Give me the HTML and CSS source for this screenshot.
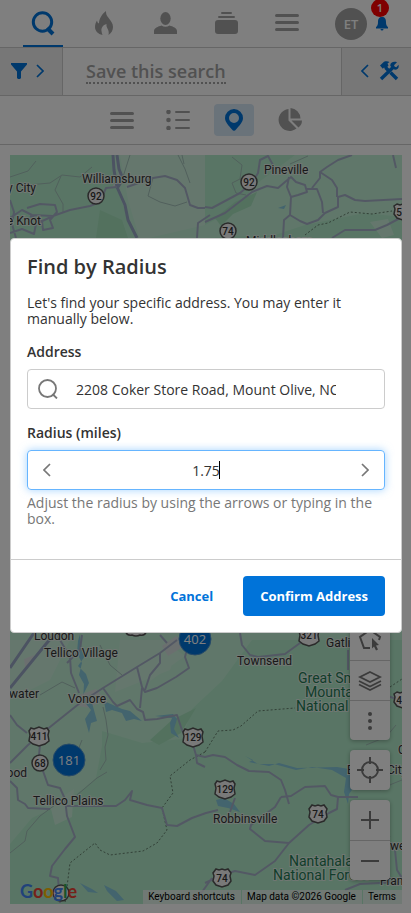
FILE: index.html
```html
<!DOCTYPE html>
<html lang="en">
<head>
    <meta charset="UTF-8">
    <meta name="viewport" content="width=device-width, initial-scale=1.0">
    <title>Find by Radius</title>
    <link rel="stylesheet" href="styles.css">
</head>
<body>
    <div class="page">
        <header class="topbar">
            <nav class="tabs">
                <a href="#" class="tab active" aria-label="Search">
                    <svg width="24" height="26" viewBox="0 0 24 26" fill="none" stroke="currentColor" stroke-width="3"><circle cx="11.500" cy="12" r="9.200"/><path d="M16 18l6 6" stroke-width="4"/></svg>
                </a>
                <a href="#" class="tab" aria-label="Hot leads">
                    <svg width="18" height="24" viewBox="0 0 18 24" fill="currentColor"><path d="M11 0c0 4 1 5 3 7.500 2 2.500 4 5 4 8.500 0 3-1.500 6-4.500 8 .5-2 .3-4-.8-6-.8-1.500-1.500-3-1.200-5C8 14 6 17 6.500 20c.1 1.500.5 2.500 1 4C3 23 0 20 0 16c0-2.500.8-4.500 2-6.500.3 1.500.8 2.500 2 3C4 8 7 3 11 0z"/></svg>
                </a>
                <a href="#" class="tab" aria-label="Contacts">
                    <svg width="23" height="22" viewBox="0 0 23 22" fill="currentColor"><ellipse cx="11.500" cy="6.500" rx="5.200" ry="6.500"/><path d="M0 22v-3c0-3 4-4.500 7.500-5.500 2.500 1.800 5.500 1.800 8 0C19 14.500 23 16 23 19v3z"/></svg>
                </a>
                <a href="#" class="tab" aria-label="Collections">
                    <svg width="23" height="22" viewBox="0 0 23 22" fill="currentColor"><rect x="6" y="0" width="11" height="2" rx="1"/><rect x="3" y="4" width="17" height="2" rx="1"/><rect x="0" y="8" width="23" height="14" rx="3"/></svg>
                </a>
                <a href="#" class="tab" aria-label="Menu">
                    <svg width="24" height="18" viewBox="0 0 24 18" fill="currentColor"><rect width="24" height="3" rx="1.500"/><rect y="7" width="24" height="3" rx="1.500"/><rect y="14" width="24" height="3" rx="1.500"/></svg>
                </a>
            </nav>
            <div class="account">
                <button type="button" class="avatar">ET</button>
                <button type="button" class="bell" aria-label="Notifications">
                    <svg width="12" height="14" viewBox="0 0 12 14" fill="currentColor"><path d="M6 0c3 0 4 2 4 5 0 2.500.5 4 2 5v1.500H0V10c1.500-1 2-2.500 2-5 0-3 1-5 4-5zM4.500 12h3a1.500 1.500 0 0 1-3 0z"/></svg>
                    <span class="badge">1</span>
                </button>
            </div>
        </header>

        <div class="searchbar">
            <button type="button" class="side filter" aria-label="Filters">
                <svg width="16" height="16" viewBox="0 0 16 16" fill="currentColor"><path d="M0 0h16v1.500L10 8.500V15l-1 1H7l-1-1V8.500L0 1.500z"/></svg>
                <svg width="8" height="14" viewBox="0 0 8 14" fill="none" stroke="currentColor" stroke-width="1.700"><path d="M1 1l6 6-6 6"/></svg>
            </button>
            <div class="save"><a href="#">Save this search</a></div>
            <button type="button" class="side tools" aria-label="Tools">
                <svg width="8" height="14" viewBox="0 0 8 14" fill="none" stroke="currentColor" stroke-width="1.700"><path d="M7 1L1 7l6 6"/></svg>
                <svg width="20" height="20" viewBox="0 0 20 20"><path d="M2 18L14.500 6" stroke="currentColor" stroke-width="3.400"/><path d="M18 1.200l-3 3 .8 1.500 1.500.5 2.200-2.400c1 3-1.500 5.500-4.500 4.700L11.300 5C10.800 2 14 0 18 1.200z" fill="currentColor"/><path d="M1 4.500L5 .8C7 0 9 .2 10.500 1L8.500 2.500l1 2L6.500 8 5 6.500 3.800 7.700z" fill="currentColor"/><path d="M6.500 6.500l3 3M11.500 11.500l6.500 6.500" stroke="currentColor" stroke-width="3.400"/></svg>
            </button>
        </div>

        <div class="views">
            <button type="button" class="view" aria-label="Rows">
                <svg width="24" height="17" viewBox="0 0 24 17" fill="currentColor"><rect width="24" height="3" rx="1.500"/><rect y="7" width="24" height="3" rx="1.500"/><rect y="14" width="24" height="3" rx="1.500"/></svg>
            </button>
            <button type="button" class="view" aria-label="List">
                <svg width="24" height="20" viewBox="0 0 24 20" fill="currentColor"><circle cx="2.500" cy="2" r="2.300"/><circle cx="2.500" cy="10" r="2.300"/><circle cx="2.500" cy="18" r="2.300"/><rect x="9" y="1" width="15" height="2" rx="1"/><rect x="9" y="9" width="15" height="2" rx="1"/><rect x="9" y="17" width="15" height="2" rx="1"/></svg>
            </button>
            <button type="button" class="view current" aria-label="Map">
                <svg width="18" height="22" viewBox="0 0 18 22" fill="currentColor"><path fill-rule="evenodd" d="M9 0a9 9 0 0 1 9 9c0 4-3.500 7.500-7 11.500-1.200 1.800-2.800 1.800-4 0C3.500 16.500 0 13 0 9a9 9 0 0 1 9-9zm0 4a5 5 0 1 0 0 10A5 5 0 0 0 9 4z"/></svg>
            </button>
            <button type="button" class="view" aria-label="Stats">
                <svg width="24" height="24" viewBox="0 0 24 24" fill="currentColor"><path d="M10.500 1v11.500l8 8A11 11 0 1 1 10.500 1zM12.500 0A11 11 0 0 1 22.500 10.500h-10zM13.500 12.500H24a9 9 0 0 1-3.500 7z"/></svg>
            </button>
        </div>

        <main class="map">
            <svg class="tiles" viewBox="10 155 392 749" preserveAspectRatio="xMidYMin slice">
                <rect class="land" x="10" y="155" width="392" height="749"/>

                <!-- woodland -->
                <path class="forest" d="M10 155h103l3 32 20 51H10zM205 155h90l-40 30-20 25-30 15zM205 238l70-3 30-10 60-12 37 4v30H205z"/>
                <path class="forest" d="M402 640v264H10v-60l22-26 30-14 20-14 14-12 6-32 0-15 40 12 40-4 10-30 30-28 30-41z"/>
                <path class="pale" d="M120 155h85v70l-65 15-12-40zM10 640h60l-20 40-40 20zM120 640h60l-10 30-55 22zM145 650l20-8 20 14-35 25zM50 805l24-16-2 28-17 8zM370 222l18-3 6 16-12 3z"/>
                <path class="town" d="M76 696l20-7 8 10-14 9-12-2zM162 646l14-10 12 8-20 12zM24 659l10-4-3 10-6 2zM120 170l7 10-15 8z"/>
                <path class="dark" d="M215 218l20-16 22-10-6 14-18 8-12 12zM150 740l22-20 24-12-15 25-22 12zM100 210l22 10 6 18H96z"/>

                <g class="water">
                    <path d="M80 634l1 14 4 8-7 10 8 8 3 9-6 12 9 8 5 18-6 2-2 10-4-14 6-9-8-10 1-16-5-9 3-12-5-10 1-12zM104 701l18 8 8 2 12 10-8-2-8 2-4-8-10-3-6 2zM155 716l18-2 4 5-3 10 5 9-8-5-1-10 2-5zM80 883l12 6 6 4-10-1zM104 885l12 6 8 9-7 1-10-10z"/>
                    <path d="M245 756l8 4-4 2 20 4 10-3 18 5 40-1 12 2 6-8 20-5-8 12-14 4 2 14-6 8-1 10-4-12 2-14-14-8-20-3-16 3-22-6-16 0zM216 800l8-2 10 6 6 8-12-4-10-2zM278 208l8-3-2 4z"/>
                </g>

                <g class="trail">
                    <path d="M28 185l22-2 12-8 18 2 12-10M55 190l8 14v8M55 190l6-14M10 177l18-6 8-10M130 155l-8 25M153 178l-5 18 12 6 15 4 12-4M178 155l7 14 5 14M232 157l10 8-2 14-8 4 4 10 10 2M290 164l18-8M184 164l-2-9"/>
                    <path d="M103 707l3 13 2 15-3 12 1 13-6 10M40 695l22-13 13 6M10 853l15-12 2-10 13-15 15-11M77 795l20-17 10-6M100 645l10 20 12 10M82 740l-4 10"/>
                    <path d="M366 745l20-8 10-12M360 870l20-14 10-20M380 790l12-6 10-4"/>
                </g>

                <g class="border">
                    <path d="M305 235l13-10 10-2 22-11 22 2 20-3M205 752l13-21 15-1 8-4 17-15 37-3M390 687l12-8"/>
                    <path d="M205 752l-15 8-10 8-10 8 3 17-11 15 5 22-10 13-14 8-33 4-10-5-5-7-25 20-5 40"/>
                </g>

                <g class="road">
                    <path class="wide" d="M113 155l1 15 3 17 8 18 3 15 9 18M117 155l2 14 4 10-5 8"/>
                    <path d="M10 218l12-8 10 5 21 1 17-6 20-4 10-4 6-14 11-1M27 208l13-4 15 1 2 7-7 8 3 8-10 2-1-9-12-5M10 233l12-4 12 5 2-10 17-8M10 200l4 12-2 12 4 14"/>
                    <path d="M127 187l26-9 12-2 12 4 8 8 5 17 8 3 7 0M197 238l1-15 12-8"/>
                    <path d="M205 207l7 1 28-15 12-10 6-10 2-13 8-4 5 9M205 222l20-9 13-10 14-11 15-6 11 2 7-6 6-5 5 5 9 3 2 7-9 3-7 2-4-10 2-10"/>
                    <path d="M291 197l-1 18 10 6 7 3 11-4 7-7 13-6v-10l7-2 10 5 10 1 37-2M307 189h10l5 13 1 11M312 188l8-10v-6l7-5 11-7 14-5M320 172l12 8 5 8v9M290 215l-6 5-1 18M332 238l13-8h30l12-5 15-8M393 155l3 13"/>
                    <path class="wide" d="M10 668l26-38M10 688l36-44 12-14"/>
                    <path d="M57 635l6 10 7 12 1 16 8 20M67 663l13-13 2-15M10 763l18-18 22-18 30-24 23-15 34-21 23-14 17-13M160 635l7 8M103 688l10 14 4 4 13-6 7 9 6 3 2 8 12-1 20-4 5 15 5 9M137 667l5 20 3 5 12-4 19-11 13-9-4-11 2-8M142 688l-2 20M160 653v10l-10 12-5 15M10 715l7 10 10 8M40 745l-1 10"/>
                    <path d="M240 633l2 12 8 10 8 2 27-3 15-11 12-4M348 650v20M385 695l17 6M193 745l3 10 9 2 8-2 12 2 12 8 12 6 20 1 12 8 4 10 4 14M196 755l1 8 8 4"/>
                    <path d="M10 781l7 7 1 12 7 4 3 4 22 1M43 771l5 14 12 3 5 11 2 17 8 21-10 12-13 17-2 10 8 2 2 25M66 806h50l9-6 7-9-2 9 17 5 15 3 5 17 10 1 15-8 14-5 12-3M230 812l5-14"/>
                    <path d="M281 797l10-1 14-9 20-1 6 9 7 2h20M281 797l-6 10-24 18-1 4 15 12 24 2M338 797l-1 12-8 4-20 12-20 18-14 18-20 14-20-4-13 4-17 8M395 850l2 20 5 8M345 890l15-6 42-2M190 900l12-8 10-14"/>
                </g>

                <g class="shield">
                    <circle cx="96" cy="196" r="8"/><circle cx="249" cy="182" r="8"/><circle cx="228" cy="231" r="8"/><circle cx="40" cy="763" r="8"/><circle cx="61" cy="893" r="8"/>
                    <path d="M31 728l3 1 5-2 5 2 3-1 2 3-1 4 1 6-4 3-6 2-6-2-4-3 1-6-1-4zM185 729l3 1 5-2 5 2 3-1 2 3-1 4 1 6-4 3-6 2-6-2-4-3 1-6-1-4zM217 781l3 1 5-2 5 2 3-1 2 3-1 4 1 6-4 3-6 2-6-2-4-3 1-6-1-4zM301 628l3 1 5-2 5 2 3-1 2 3-1 4 1 6-4 3-6 2-6-2-4-3 1-6-1-4z"/>
                    <path d="M312 805l3 1 3-1 3 1 3-1 3 4-1 3 1 5-3 4-6 2-6-2-3-4 1-5-1-3zM216 869l3 1 3-1 3 1 3-1 3 4-1 3 1 5-3 4-6 2-6-2-3-4 1-5-1-3zM397 204l3 1 3-1 3 1v14l-3 1-6-2-3-4 1-5-1-3zM397 692l3 1 3-1 3 1v14l-3 1-6-2-3-4 1-5-1-3z"/>
                    <path d="M126 627h20v5q-1 4-6 3-4 2-8 0-5 1-6-3z"/>
                </g>
                <g class="num">
                    <text x="96" y="200">92</text><text x="249" y="186">92</text><text x="228" y="235">74</text><text x="40" y="767">68</text>
                    <text x="39" y="740">411</text><text x="193" y="741">129</text><text x="225" y="793">129</text><text x="309" y="639">321</text>
                    <text x="318" y="818">74</text><text x="222" y="882">74</text><text x="399" y="216">5</text><text x="399" y="704">4</text>
                </g>

                <g class="place">
                    <text x="82" y="183">Williamsburg</text>
                    <text x="36" y="192" text-anchor="end">y City</text>
                    <text x="41" y="225" text-anchor="end">e Knot</text>
                    <text x="264" y="174">Pineville</text>
                    <text x="246" y="245">Middlesboro</text>
                    <text x="34" y="640">Loudon</text>
                    <text x="44" y="657">Tellico Village</text>
                    <text x="237" y="665">Townsend</text>
                    <text x="326" y="647">Gatlinburg</text>
                    <text x="68" y="703">Vonore</text>
                    <text x="39" y="698" text-anchor="end">water</text>
                    <text x="27" y="777" text-anchor="end">ood</text>
                    <text x="33" y="805">Tellico Plains</text>
                    <text x="213" y="823">Robbinsville</text>
                    <text x="347" y="774">Bryson City</text>
                    <text x="398" y="754">Cherokee</text>
                    <text x="390" y="850">we</text>
                    <text x="380" y="885">Franklin</text>
                </g>
                <g class="park">
                    <text x="298" y="683">Great Smoky</text>
                    <text x="305" y="697">Mountains</text>
                    <text x="296" y="711">National Park</text>
                    <text x="289" y="866">Nantahala</text>
                    <text x="273" y="880">National Forest</text>
                </g>

                <g class="cluster">
                    <circle cx="195" cy="639" r="16"/><text x="195" y="644">402</text>
                    <circle cx="69" cy="760" r="16"/><text x="69" y="765">181</text>
                </g>
            </svg>

            <div class="controls">
                <div class="group">
                    <button type="button" aria-label="Draw area">
                        <svg width="24" height="24" viewBox="0 0 24 24" fill="none" stroke="currentColor" stroke-width="2"><path d="M12 20H6L2 9l10-7 10 7-1 3"/><path d="M14 10l7 7-3 .5 2 4-2 1-2-4-2 2z" fill="currentColor" stroke="none"/></svg>
                    </button>
                    <button type="button" aria-label="Layers">
                        <svg width="24" height="22" viewBox="0 0 24 22" fill="none" stroke="currentColor" stroke-width="1.800"><path d="M12 2l10 5-10 5L2 7zM1 11l11 5.500L23 11M1 14.500L12 20l11-5.500"/></svg>
                    </button>
                    <button type="button" aria-label="More">
                        <svg width="4" height="18" viewBox="0 0 4 18" fill="currentColor"><circle cx="2" cy="2" r="2"/><circle cx="2" cy="9" r="2"/><circle cx="2" cy="16" r="2"/></svg>
                    </button>
                </div>
                <div class="group">
                    <button type="button" aria-label="My location">
                        <svg width="26" height="26" viewBox="0 0 26 26" fill="none" stroke="currentColor" stroke-width="2"><circle cx="13" cy="13" r="8"/><path d="M13 0v7M13 19v7M0 13h7M19 13h7"/></svg>
                    </button>
                </div>
                <div class="group">
                    <button type="button" aria-label="Zoom in">
                        <svg width="20" height="20" viewBox="0 0 20 20" stroke="currentColor" stroke-width="2"><path d="M10 1v18M1 10h18"/></svg>
                    </button>
                    <button type="button" aria-label="Zoom out">
                        <svg width="20" height="20" viewBox="0 0 20 20" stroke="currentColor" stroke-width="2"><path d="M1 10h18"/></svg>
                    </button>
                </div>
            </div>

            <a href="#" class="google"><span class="b">G</span><span class="r">o</span><span class="y">o</span><span class="b">g</span><span class="g">l</span><span class="r">e</span></a>
            <div class="legal">
                <button type="button">Keyboard shortcuts</button>
                <span>Map data ©2026 Google</span>
                <a href="#">Terms</a>
            </div>
        </main>
    </div>

    <div class="overlay">
        <form class="modal" role="dialog" aria-labelledby="modalTitle">
            <div class="modal-body">
                <h1 id="modalTitle">Find by Radius</h1>
                <p class="intro">Let's find your specific address. You may enter it manually below.</p>

                <label for="address">Address</label>
                <div class="field">
                    <svg class="lens" width="20" height="20" viewBox="0 0 20 20" fill="none" stroke="currentColor" stroke-width="1.800"><circle cx="9.500" cy="9.500" r="8.500"/><path d="M14.500 15l4.500 4.500"/></svg>
                    <input type="text" id="address" value="2208 Coker Store Road, Mount Olive, NC 28365">
                </div>

                <label for="radius">Radius (miles)</label>
                <div class="field focused">
                    <button type="button" class="step" aria-label="Decrease">
                        <svg width="8" height="14" viewBox="0 0 8 14" fill="none" stroke="currentColor" stroke-width="1.700"><path d="M7 1L1 7l6 6"/></svg>
                    </button>
                    <input type="text" id="radius" value="1.75" inputmode="decimal" aria-describedby="radiusHelp">
                    <span class="caret"></span>
                    <button type="button" class="step" aria-label="Increase">
                        <svg width="8" height="14" viewBox="0 0 8 14" fill="none" stroke="currentColor" stroke-width="1.700"><path d="M1 1l6 6-6 6"/></svg>
                    </button>
                </div>
                <p class="help" id="radiusHelp">Adjust the radius by using the arrows or typing in the box.</p>
            </div>
            <div class="modal-footer">
                <button type="button" class="cancel">Cancel</button>
                <button type="submit" class="confirm">Confirm Address</button>
            </div>
        </form>
    </div>
</body>
</html>
```
FILE: styles.css
```css
* {
    box-sizing: border-box;
}
body {
    margin: 0;
    font-family: "Open Sans", sans-serif;
    font-size: 14px;
    color: #333;
    background: #fff;
}
button {
    margin: 0;
    padding: 0;
    border: none;
    background: none;
    font-family: inherit;
    color: inherit;
    cursor: pointer;
}
svg {
    display: block;
}
.page {
    display: flex;
    flex-direction: column;
    min-height: 100vh;
}

/* top navigation */
.topbar {
    display: flex;
    justify-content: space-between;
    height: 48px;
    padding: 0 23px;
    border-bottom: 1px solid #ccc;
}
.tabs {
    display: flex;
    gap: 21px;
}
.tab {
    display: flex;
    align-items: center;
    justify-content: center;
    width: 40px;
    border-bottom: 2px solid transparent;
    color: #a3a3a3;
}
.tab.active {
    color: #0073d9;
    border-color: #0073d9;
}
.account {
    display: flex;
    align-items: center;
    gap: 9px;
}
.avatar {
    width: 32px;
    height: 32px;
    border-radius: 50%;
    background: #a3a3a3;
    color: #fff;
    font-size: 13px;
    font-weight: 600;
}
.bell {
    position: relative;
    color: #0073d9;
}
.badge {
    position: absolute;
    top: -18px;
    left: -5px;
    width: 18px;
    height: 18px;
    border-radius: 50%;
    background: #f00;
    color: #fff;
    font-size: 11px;
    font-weight: 600;
    line-height: 18px;
}

/* save search strip */
.searchbar {
    display: flex;
    height: 48px;
    border-bottom: 1px solid #ccc;
}
.side {
    display: flex;
    align-items: center;
    gap: 9px;
    padding: 0 18px 2px 11px;
    background: #efefef;
    color: #0073d9;
}
.filter {
    border-right: 1px solid #ccc;
}
.tools {
    padding: 0 12px 2px 19px;
    gap: 10px;
    border-left: 1px solid #ccc;
}
.save {
    flex: 1;
    padding: 13px 23px;
}
.save a {
    display: inline-block;
    border-bottom: 2px dotted #a3a3a3;
    color: #a3a3a3;
    font-size: 18px;
    font-weight: 600;
    line-height: 21px;
    text-decoration: none;
}

/* view switcher */
.views {
    display: flex;
    align-items: center;
    justify-content: center;
    gap: 16px;
    height: 49px;
    border-bottom: 1px solid #ccc;
}
.view {
    display: flex;
    align-items: center;
    justify-content: center;
    width: 40px;
    height: 32px;
    border-radius: 4px;
    color: #a3a3a3;
}
.view.current {
    background: #d4e6f5;
    color: #0073d9;
}

/* map */
.map {
    position: relative;
    flex: 1;
    margin: 10px 9px 9px 10px;
    min-height: 500px;
    overflow: hidden;
}
.tiles {
    position: absolute;
    width: 100%;
    height: 100%;
    font-family: Roboto, sans-serif;
}
.land { fill: #c0efd4; }
.forest { fill: #b2ebca; }
.pale { fill: #cbefdb; }
.dark { fill: #a6e2bd; }
.town { fill: #d6dfdf; }
.water { fill: #86c8dc; }
.road {
    fill: none;
    stroke: #a7b1c9;
    stroke-width: 2;
    stroke-linejoin: round;
}
.road .wide {
    stroke: #98a6c4;
    stroke-width: 3;
}
.trail {
    fill: none;
    stroke: #a3c0b9;
    stroke-width: 1;
}
.border {
    fill: none;
    stroke: #65806e;
    stroke-width: 1;
    stroke-dasharray: 2 2;
}
.shield {
    fill: #f2f2f2;
    stroke: #555;
    stroke-width: 1.5;
}
.num {
    font-size: 10px;
    font-weight: 500;
    text-anchor: middle;
    fill: #333;
}
.place, .park {
    font-size: 12px;
    fill: #333;
    stroke: #e0efe6;
    stroke-width: 2;
    paint-order: stroke;
}
.park {
    font-size: 14px;
    fill: #1e7d55;
}
.cluster {
    fill: #0073d9;
    stroke: #4f94cf;
    stroke-width: 1;
}
.cluster text {
    font-family: "Open Sans", sans-serif;
    font-size: 13px;
    text-anchor: middle;
    fill: #fff;
    stroke: none;
}
.controls {
    position: absolute;
    right: 12px;
    bottom: 24px;
    display: flex;
    flex-direction: column;
    gap: 10px;
}
.group {
    border-radius: 4px;
    background: #fff;
    box-shadow: 0 1px 4px rgba(0, 0, 0, 0.3);
}
.group button {
    display: flex;
    align-items: center;
    justify-content: center;
    width: 40px;
    height: 40px;
    color: #777;
}
.group button + button {
    border-top: 1px solid #ccc;
}
.google {
    position: absolute;
    left: 10px;
    bottom: 1px;
    font-family: Lato, sans-serif;
    font-size: 18px;
    font-weight: 700;
    line-height: 24px;
    text-decoration: none;
}
.google .b { color: #4285f4; }
.google .r { color: #ea4335; }
.google .y { color: #fbbc05; }
.google .g { color: #34a853; }
.legal {
    position: absolute;
    right: 0;
    bottom: 0;
    display: flex;
    gap: 1px;
    font-family: Roboto, sans-serif;
    font-size: 10px;
    line-height: 14px;
    color: #000;
}
.legal button, .legal span, .legal a {
    padding: 0 6px 0 5px;
    background: rgba(245, 245, 245, 0.7);
    color: #000;
    font-size: 10px;
    line-height: 14px;
    text-decoration: none;
}

/* dialog */
.overlay {
    position: fixed;
    inset: 0;
    display: flex;
    align-items: center;
    justify-content: center;
    padding: 0 9px 42px 10px;
    background: rgba(0, 0, 0, 0.5);
}
.modal {
    width: 100%;
    max-width: 500px;
    border: 1px solid #ccc;
    border-radius: 4px;
    background: #fff;
}
.modal-body {
    padding: 16px 16px 32px;
}
h1 {
    margin: 0 0 16px;
    font-size: 20px;
    font-weight: 600;
    line-height: 24px;
}
.intro, .help {
    margin: 0 0 16px;
    line-height: 16px;
}
.help {
    margin: 5px 0 0;
    color: #777;
}
label {
    display: block;
    margin-bottom: 9px;
    font-weight: 600;
    line-height: 17px;
}
.field {
    position: relative;
    display: flex;
    align-items: center;
    height: 40px;
    margin-bottom: 15px;
    border: 1px solid #ccc;
    border-radius: 4px;
}
.field input {
    flex: 1;
    min-width: 0;
    padding: 0;
    border: none;
    outline: none;
    background: none;
    font-family: inherit;
    font-size: 14px;
    color: #333;
}
.lens {
    margin: 0 18px 0 10px;
    color: #777;
}
#address {
    margin-right: 48px;
}
#radius {
    text-align: center;
}
.focused {
    margin-bottom: 0;
    border-color: #66b5ff;
    box-shadow: 0 0 8px rgba(102, 181, 255, 0.6);
}
.caret {
    position: absolute;
    top: 10px;
    left: calc(50% + 13px);
    width: 1px;
    height: 18px;
    background: #000;
}
.step {
    display: flex;
    align-items: center;
    justify-content: center;
    width: 38px;
    height: 38px;
    color: #777;
}
.modal-footer {
    display: flex;
    justify-content: flex-end;
    gap: 13px;
    padding: 16px;
    border-top: 1px solid #ccc;
}
.cancel, .confirm {
    height: 40px;
    padding: 0 17px;
    border-radius: 4px;
    font-size: 13px;
    font-weight: 700;
    color: #0073d9;
}
.confirm {
    background: #0073d9;
    color: #fff;
}
```
